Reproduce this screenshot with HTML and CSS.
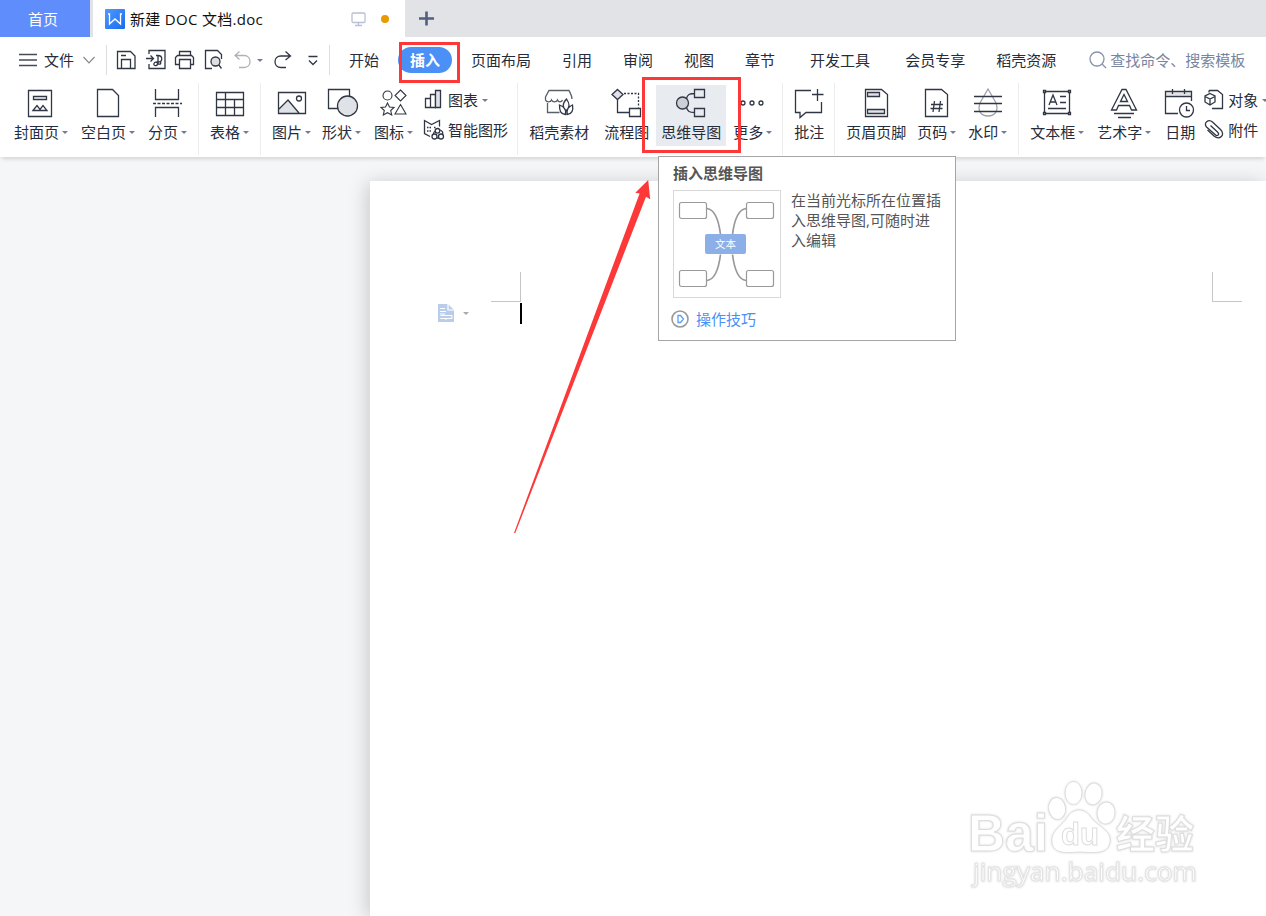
FILE: index.html
```
<!DOCTYPE html>
<html lang="zh-CN">
<head>
    <meta charset="UTF-8">
    <meta name="viewport" content="width=device-width, initial-scale=1.0">
    <title>新建 DOC 文档.doc</title>
    <link rel="stylesheet" href="styles.css">
</head>
<body>
    <header class="titlebar">
        <div class="home-tab">首页</div>
        <div class="doc-tab">
            <svg class="logo" width="20" height="20" viewBox="0 0 20 20">
                <defs><linearGradient id="blue" x1="0" y1="0" x2="1" y2="1"><stop offset="0" stop-color="#5199ff"/><stop offset="1" stop-color="#1a6cf0"/></linearGradient></defs>
                <rect width="20" height="20" rx="1" fill="url(#blue)"/>
                <path d="M3 5h1.500v10l5.500-5 5.500 5V5H17" fill="none" stroke="#fff" stroke-width="1.300"/>
            </svg>
            <span class="doc-name">新建 DOC 文档.doc</span>
            <svg class="monitor" width="16" height="16" viewBox="0 0 16 16" fill="none" stroke="#b9c0d3" stroke-width="1.300"><rect x="2" y="2" width="13" height="9.500" rx="1"/><path d="M8.500 11.500v3M5 14.500h7"/></svg>
            <span class="dot"></span>
        </div>
        <svg class="plus" width="16" height="16" viewBox="0 0 16 16" stroke="#525f7e" stroke-width="2.600"><path d="M8.500 .500v14M1 7.500h15"/></svg>
    </header>

    <nav class="menubar">
        <div class="file-menu">
            <svg width="18" height="14" viewBox="0 0 18 14" stroke="#454b58" stroke-width="1.300"><path d="M0 1.500h18M0 7h18M0 12.500h18"/></svg>
            <span>文件</span>
            <svg class="chevron" width="12" height="8" viewBox="0 0 12 8" fill="none" stroke="#888" stroke-width="1.200"><path d="M.500 1L6 6.800 11.500 1"/></svg>
        </div>
        <div class="quick">
            <svg width="20" height="20" viewBox="0 0 20 20"><path d="M.500 1.500h13l4.500 4.500v12.500H.500zM4.500 18V9.500h9V18M4 5.500h5"/></svg>
            <svg width="20" height="20" viewBox="0 0 20 20"><path d="M3 4V.500h16v18H3V14M0 8.500h7M4.500 5.500l3 3-3 3"/><path d="M10 5.500h2c5 0 5 6.500 0 6.500h-1.500M12 5.500v7c0 4-5 4-4 1 1-2.500 3-1 4 0s3.500 1 2.500-1.500"/></svg>
            <svg width="20" height="20" viewBox="0 0 20 20"><path d="M4.500 5V1.500h11V5M4 14.500H.500v-7l2-2h14l2 2v7H16M4.500 9.500h11v9h-11z"/></svg>
            <svg width="20" height="20" viewBox="0 0 20 20"><path d="M8 18.500H1.500V.500h12l4 4V9M14.500 14.500l3 4"/><circle cx="11.500" cy="11.500" r="4.500" fill="#dcdfe4"/></svg>
            <svg class="undo" width="17" height="20" viewBox="0 0 17 20"><path d="M5.500 1.500L1 5.500l4.500 4M1 5.500h9c8 0 8 12 0 12H5"/></svg>
            <i class="caret"></i>
            <svg class="redo" width="17" height="20" viewBox="0 0 17 20"><path d="M11.500 1.500l5 4.500-5 4M16 6H7c-8 0-8 11.500 0 11.500h5"/></svg>
            <svg class="more-tools" width="10" height="20" viewBox="0 0 10 20"><path d="M.500 6.500h9M1 10.500l4 4 4-4"/></svg>
        </div>
        <div class="tabs">
            <span class="tab">开始</span>
            <span class="tab active">插入</span>
            <span class="tab">页面布局</span>
            <span class="tab">引用</span>
            <span class="tab">审阅</span>
            <span class="tab">视图</span>
            <span class="tab">章节</span>
            <span class="tab loose">开发工具</span>
            <span class="tab loose">会员专享</span>
            <span class="tab">稻壳资源</span>
        </div>
        <div class="search">
            <svg width="18" height="20" viewBox="0 0 18 20" fill="none" stroke="#8792ab" stroke-width="1.300"><circle cx="8" cy="9" r="7"/><path d="M13 14l4 4"/></svg>
            <span>查找命令、搜索模板</span>
        </div>
    </nav>

    <section class="ribbon">
        <div class="btn">
            <svg width="32" height="30" viewBox="0 0 32 30"><path d="M3.500 2.500h23v26h-23zM8.500 8.500h13v3h-13zM8 22.500l4-5 3 4 3-4 4 5z"/></svg>
            <span class="label">封面页<i class="caret"></i></span>
        </div>
        <div class="btn far">
            <svg width="32" height="30" viewBox="0 0 32 30"><path d="M5.500 1.500h15l6 6v21h-21z"/></svg>
            <span class="label">空白页<i class="caret"></i></span>
        </div>
        <div class="btn far">
            <svg width="31" height="30" viewBox="0 0 31 30"><path d="M3.500 1v10.500h23V1M3.500 29v-9.500h23V29"/><path d="M1 15.500h29" stroke-dasharray="3 1.500"/></svg>
            <span class="label">分页<i class="caret"></i></span>
        </div>
        <i class="sep"></i>
        <div class="btn">
            <svg width="31" height="30" viewBox="0 0 31 30"><path d="M2.500 4.500h27v23h-27zM2.500 11.500h27M2.500 19.500h27M11.500 4.500v23M20.500 11.500v16"/></svg>
            <span class="label">表格<i class="caret"></i></span>
        </div>
        <i class="sep"></i>
        <div class="btn">
            <svg width="31" height="30" viewBox="0 0 31 30"><path d="M3 21l9-9 11 13v.500H3z" fill="#dfe2e6" stroke="none"/><path d="M2.500 4.500h27v21h-27zM3 21l9-9 11 13"/><circle cx="23" cy="10.500" r="2.500"/></svg>
            <span class="label">图片<i class="caret"></i></span>
        </div>
        <div class="btn">
            <svg width="31" height="30" viewBox="0 0 31 30"><path d="M2.500 1.500h21v19h-21z"/><circle cx="21.500" cy="18" r="10" fill="#dfe2e6"/></svg>
            <span class="label">形状<i class="caret"></i></span>
        </div>
        <div class="btn far">
            <svg width="31" height="30" viewBox="0 0 31 30" class="thin"><circle cx="9.500" cy="7.500" r="4.500"/><path d="M22.500 2l5.500 5.500-5.500 5.500L17 7.500zM9.500 15l2 4 4.500.500-3.300 3 1 4.500-4.200-2.300L5.300 27l1-4.500-3.300-3 4.500-.500zM22.500 16.500l5.500 9.500H17z"/></svg>
            <span class="label">图标<i class="caret"></i></span>
        </div>
        <div class="stack charts">
            <div class="row">
                <svg width="20" height="20" viewBox="0 0 20 20"><path d="M1.500 8.500h5v9h-5zM6.500 4.500h5v13h-5z"/><path d="M11.500.500h5v17h-5z" fill="#dfe2e6"/></svg>
                <span>图表</span><i class="caret"></i>
            </div>
            <div class="row">
                <svg width="20" height="20" viewBox="0 0 20 20"><path d="M6 16.500l-5.500-3V.500l7 4 8-4v6"/><path d="M3 7.500h4M3 11h4M10 7.500h2" stroke-dasharray="1.500 1"/><circle cx="13.500" cy="10.800" r="2.300"/><circle cx="10.500" cy="16.500" r="2.500"/><circle cx="17" cy="16.500" r="2.500"/><path d="M11.500 11c-2 1-2 2-2 3M16 10c3 1 3 3 2.500 4M13 18h2"/></svg>
                <span>智能图形</span>
            </div>
        </div>
        <i class="sep tight"></i>
        <div class="btn">
            <svg width="32" height="30" viewBox="0 0 32 30"><path d="M29 11c0-4-2-6-3-8.500H6L2.500 9v3c1 2.500 5 2.500 6 0 1 2.500 5 2.500 6 0 1 2.500 4 2.500 5 0M4.500 15v9.500h12" stroke="#59606c"/><path d="M23.500 11c-4.500 5-4 8-.500 12 4-4 4-7 .500-12zM16.500 17c0 6 1 9 6 9.500 1-4-1-7.500-6-9.500zM29.500 17c-5 2-6 5-5.500 9.500 5-.500 6.500-4 5.500-9.500z" fill="#fff"/></svg>
            <span class="label">稻壳素材</span>
        </div>
        <div class="btn flow">
            <svg width="31" height="30" viewBox="0 0 31 30"><path d="M6.500 1.500l5.500 5-5.500 5-5.500-5z" fill="#dfe2e6"/><path d="M6.500 12v12.500h12M18.500 20.500h11v8h-11z"/><path d="M13 5.500h14.500v14" stroke-dasharray="2 1.500"/></svg>
            <span class="label">流程图</span>
        </div>
        <div class="btn selected">
            <svg width="32" height="30" viewBox="0 0 32 30"><path d="M19.500 1.500h10v8h-10zM19.500 20.500h10v8h-10zM19.500 5.500c-5 0-7 1-8 5M19.500 24.500c-5 0-7-1-8-5"/><circle cx="7.500" cy="15" r="6" fill="#ccd0d6"/></svg>
            <span class="label">思维导图</span>
        </div>
        <div class="btn">
            <svg width="31" height="30" viewBox="0 0 31 30"><circle cx="6" cy="15" r="2"/><circle cx="15" cy="15" r="2"/><circle cx="24" cy="15" r="2"/></svg>
            <span class="label">更多<i class="caret"></i></span>
        </div>
        <i class="sep less"></i>
        <div class="btn">
            <svg width="30" height="30" viewBox="0 0 30 30"><path d="M17 2.500H1.500v22h4.500v5l6-5h15.500V14M23.500 1v12M18 6.500h11.500"/></svg>
            <span class="label">批注</span>
        </div>
        <i class="sep less"></i>
        <div class="btn">
            <svg width="32" height="30" viewBox="0 0 32 30"><path d="M5.500 1.500h16l6 5v22h-22z"/><path d="M7.500 4.500h12v4h-12zM7.500 21.500h17v4h-17z" fill="#dfe2e6"/></svg>
            <span class="label">页眉页脚</span>
        </div>
        <div class="btn">
            <svg width="31" height="30" viewBox="0 0 31 30"><path d="M4.500 1.500h16l6 5v22h-22zM13.500 13l-1.500 11M19.500 13L18 24M10 16.500h12M9.500 20.500h12"/></svg>
            <span class="label">页码<i class="caret"></i></span>
        </div>
        <div class="btn near">
            <svg width="31" height="30" viewBox="0 0 31 30"><path d="M16 1L8.500 14c-4 9 1 14 7.500 14s11.500-5 7.500-14z" stroke="#9ca1ab"/><path d="M2 8.500h28M2 15.500h28M2 23.500h28"/></svg>
            <span class="label">水印<i class="caret"></i></span>
        </div>
        <i class="sep"></i>
        <div class="btn">
            <svg width="32" height="30" viewBox="0 0 32 30"><path d="M3.500 3.500h25v22h-25zM8 17l4-10 4 10M9.500 14h5M19 8.500h6M19 14.500h6M7 20.500h18"/><path d="M2.500 2.500h2v2h-2zM27.500 2.500h2v2h-2zM2.500 24.500h2v2h-2zM27.500 24.500h2v2h-2z" fill="#fff"/></svg>
            <span class="label">文本框<i class="caret"></i></span>
        </div>
        <div class="btn far">
            <svg width="32" height="30" viewBox="0 0 32 30"><path d="M14 1.500h4l10.500 20.500h-5l-2-4.500h-11l-2 4.500h-5zM12.500 13.500l3.500-7 3.500 7zM6 25.500h20M10 29.500h13"/></svg>
            <span class="label">艺术字<i class="caret"></i></span>
        </div>
        <div class="btn date">
            <svg width="30" height="30" viewBox="0 0 30 30"><path d="M1 4.500h25v3H1z" fill="#dfe2e6" stroke="none"/><path d="M13 25.500H.500v-22h26V13M.500 8.500h26M7.500 1v5M19.500 1v5"/><circle cx="21.500" cy="22" r="7" fill="#fff"/><path d="M21.500 18v4.500H25"/></svg>
            <span class="label">日期</span>
        </div>
        <div class="stack objects">
            <div class="row">
                <svg width="20" height="20" viewBox="0 0 20 20"><path d="M5 .500h8.500l5 4v14H13M5 .500v2M8 18.500h5"/><path d="M6 3.500l5 2.500v6l-5 3-5-3V6zM1 6.500l5 2.500 5-2.500M6 9v6" fill="#fff"/></svg>
                <span>对象</span><i class="caret"></i>
            </div>
            <div class="row">
                <svg width="20" height="20" viewBox="0 0 20 20"><path d="M6.500 5.500l7 6.500c2.500 2.500 0 5-2.500 2.500L2.500 7C-1 3 4.500-1.500 8.500 2l8 7.500c5.500 5.500-1 11-6.500 6.500L3.500 10"/></svg>
                <span>附件</span>
            </div>
        </div>
    </section>

    <main class="workspace">
        <div class="page">
            <div class="page-top">
                <i class="corner left"></i>
                <i class="corner right"></i>
            </div>
            <div class="line">
                <svg class="paste" width="16" height="18" viewBox="0 0 16 18"><path d="M0 0h10l6 6v12H0z" fill="#b9cdeb"/><path d="M10 0v6h6M2 4.500h5M2 7.500h6M2 10h5" fill="none" stroke="#fff" stroke-width="1.200"/><path d="M2.500 11.500h11.500v3H8v1.500M8 14.500H2.500z" fill="none" stroke="#fff"/></svg>
                <i class="caret gray"></i>
                <i class="cursor"></i>
            </div>
        </div>
    </main>

    <aside class="tooltip">
        <h3>插入思维导图</h3>
        <div class="tip-body">
            <svg width="108" height="108" viewBox="0 0 108 108" fill="none" stroke="#999" stroke-width="1.200">
                <rect x=".500" y=".500" width="107" height="107" stroke="#d9d9d9" stroke-width="1"/>
                <rect x="6.500" y="12.500" width="27" height="16" rx="2"/>
                <rect x="73.500" y="12.500" width="27" height="16" rx="2"/>
                <rect x="6.500" y="80.500" width="27" height="16" rx="2"/>
                <rect x="73.500" y="80.500" width="27" height="16" rx="2"/>
                <path d="M34 18.500c8 1 12 14 13.500 26M73 18.500c-8 1-12 14-13.500 26M34 90.500c8-1 12-14 13.500-26M73 90.500c-8-1-12-14-13.500-26" stroke-width="1.700"/>
                <rect x="32" y="44" width="41" height="20" rx="2" fill="#8dafe8" stroke="none"/>
                <text x="52.500" y="58" text-anchor="middle" font-size="10.500" fill="#fff" stroke="none">文本</text>
            </svg>
            <p>在当前光标所在位置插入思维导图,可随时进入编辑</p>
        </div>
        <div class="tip-link">
            <svg width="18" height="18" viewBox="0 0 18 18" fill="none"><circle cx="9" cy="9" r="8" stroke="#999" stroke-width="1.600"/><path d="M7 5.500v7h2.500l3-3.500-3-3.500z" stroke="#5c9df5" stroke-width="1.300"/></svg>
            <span>操作技巧</span>
        </div>
    </aside>

    <svg class="watermark" width="240" height="120" viewBox="0 0 240 120">
        <g class="paw">
            <ellipse cx="97" cy="28.500" rx="8.500" ry="11" transform="rotate(-8 97 28)"/>
            <ellipse cx="113.500" cy="13" rx="8.500" ry="11.500"/>
            <ellipse cx="133.500" cy="14" rx="8.500" ry="11" transform="rotate(10 133.500 14)"/>
            <ellipse cx="146" cy="33" rx="9" ry="11" transform="rotate(5 146 33)"/>
            <path d="M108 36c6-8 16-8 22 0 6 10 22 14 20 26-2 12-14 11-30 10-14 1-26 2-28-9-2-13 11-17 16-27z"/>
        </g>
        <text x="8" y="71" font-size="51" textLength="80" lengthAdjust="spacingAndGlyphs" class="bold">Bai</text>
        <text x="101" y="65" font-size="32" textLength="38" lengthAdjust="spacingAndGlyphs" class="bold">du</text>
        <text x="156" y="68" font-size="39" textLength="78" lengthAdjust="spacingAndGlyphs" class="bold">经验</text>
        <text x="13" y="101" font-size="25" textLength="224" lengthAdjust="spacingAndGlyphs" class="site">jingyan.baidu.com</text>
    </svg>

    <!-- red boxes and arrow -->
    <svg class="marks" width="1266" height="916" viewBox="0 0 1266 916">
        <rect x="400.500" y="43.500" width="58" height="38"/>
        <rect x="643.500" y="78.500" width="96" height="73"/>
        <path d="M648.200 180L635.300 192.700l4.300.800L514 533h1.300L646 196.800l4.200 2.400z"/>
    </svg>
</body>
</html>
```
FILE: styles.css
```
* {
    box-sizing: border-box;
}

body {
    margin: 0;
    height: 916px;
    position: relative;
    display: flex;
    flex-direction: column;
    overflow: hidden;
    font-family: "Open Sans", "Noto Sans CJK SC", sans-serif;
    font-size: 15px;
    line-height: 20px;
    color: #262c39;
    background: #f5f6f8;
    white-space: nowrap;
}

svg {
    flex: none;
    overflow: visible;
}

.titlebar {
    height: 37px;
    flex: none;
    display: flex;
    align-items: center;
    background: #e1e3e7;
}

.home-tab {
    width: 90px;
    height: 37px;
    line-height: 38px;
    padding-right: 4px;
    text-align: center;
    color: #fff;
    background: #608dfc;
}

.doc-tab {
    width: 312px;
    height: 37px;
    margin-left: 3px;
    padding: 0 16px 0 12px;
    display: flex;
    align-items: center;
    background: #fff;
    color: #111;
}

.doc-name {
    margin-left: 5px;
    letter-spacing: 0.3px;
}

.monitor {
    margin-left: auto;
}

.dot {
    width: 8px;
    height: 8px;
    margin-left: 15px;
    border-radius: 50%;
    background: #e89a00;
}

.plus {
    margin-left: 13px;
}

.menubar {
    height: 46px;
    flex: none;
    display: flex;
    align-items: center;
    background: #fff;
}

.file-menu {
    width: 107px;
    height: 30px;
    padding-left: 19px;
    display: flex;
    align-items: center;
    gap: 7px;
    border-right: 1px solid #ddd;
}

.chevron {
    margin-left: 2px;
}

.quick {
    width: 223px;
    height: 30px;
    padding-left: 10px;
    display: flex;
    align-items: center;
    gap: 9px;
    border-right: 1px solid #ddd;
    fill: none;
    stroke: #303644;
    stroke-width: 1.3;
}

.undo {
    stroke: #aeb1b7;
    margin-left: 1px;
}

.quick .caret {
    margin-left: -3px;
}

.redo {
    margin-left: 2px;
}

.more-tools {
    margin-left: 8px;
}

.tabs {
    display: flex;
    gap: 31px;
    margin-left: 19px;
}

.loose {
    margin-left: 4px;
}

.active {
    height: 26px;
    margin: -3px -12px;
    padding: 0 12px;
    line-height: 26px;
    border-radius: 13px;
    background: #4a90f6;
    color: #fff;
    font-weight: bold;
}

.search {
    display: flex;
    align-items: center;
    gap: 3px;
    margin-left: 33px;
    color: #7885a0;
}

.caret {
    flex: none;
    display: inline-block;
    border: 3px solid transparent;
    border-top-color: #6f7d99;
    border-bottom: 0;
}

.ribbon {
    height: 74px;
    flex: none;
    display: flex;
    gap: 11px;
    padding-left: 14px;
    background: #fff;
    box-shadow: 0 4px 4px -2px rgba(0, 0, 0, 0.14);
    overflow: hidden;
    position: relative;
}

.ribbon svg {
    fill: none;
    stroke: #303644;
    stroke-width: 1.3;
}

.ribbon .thin {
    stroke-width: 1.1;
}

.btn {
    flex: none;
    display: flex;
    flex-direction: column;
    align-items: center;
    gap: 4px;
    padding-top: 5px;
}

.label {
    display: flex;
    align-items: center;
    gap: 3px;
}

.far {
    margin-left: 2px;
}

.near {
    margin-left: 1px;
}

.flow {
    margin-left: 4px;
}

.date {
    margin-left: 3px;
}

.selected {
    width: 70px;
    height: 61px;
    margin: 2px -4px 0;
    padding-top: 3px;
    background: #e8ebf0;
}

.sep {
    width: 1px;
    height: 72px;
    flex: none;
    background: #ededee;
}

.tight {
    margin-left: -2px;
}

.less {
    margin-left: -1px;
}

.stack {
    flex: none;
    display: flex;
    flex-direction: column;
    gap: 10px;
    padding-top: 7px;
}

.row {
    height: 20px;
    display: flex;
    align-items: center;
    gap: 4px;
}

.objects {
    margin-left: -2px;
}

.workspace {
    flex: 1;
    padding: 24px 0 0 370px;
}

.page {
    height: 100%;
    background: #fff;
    box-shadow: -3px 2px 18px rgba(0, 0, 0, 0.18);
}

.page-top {
    height: 121px;
    display: flex;
    justify-content: space-between;
    align-items: flex-end;
    padding: 0 24px 0 121px;
}

.corner {
    width: 30px;
    height: 30px;
    border-bottom: 1px solid #c5c5c5;
}

.left {
    border-right: 1px solid #c5c5c5;
}

.right {
    border-left: 1px solid #c5c5c5;
}

.line {
    display: flex;
    align-items: center;
    padding: 1px 0 0 68px;
}

.paste {
    margin-bottom: 1px;
}

.gray {
    margin-left: 9px;
    border-top-color: #aaa;
}

.cursor {
    width: 2px;
    height: 21px;
    margin-left: 51px;
    background: #000;
}

.tooltip {
    position: absolute;
    left: 658px;
    top: 156px;
    width: 298px;
    height: 185px;
    padding: 6px 12px 0 14px;
    border: 1px solid #a5a5a5;
    background: #fff;
    color: #555;
}

.tooltip h3 {
    margin: 0 0 7px;
    font-size: 15px;
    line-height: 20px;
}

.tip-body {
    display: flex;
    gap: 10px;
}

.tip-body p {
    width: 152px;
    margin: 0;
    white-space: normal;
}

.tip-link {
    display: flex;
    align-items: center;
    gap: 7px;
    margin: 11px 0 0 -2px;
    color: #4a90f6;
}

.watermark {
    position: absolute;
    left: 960px;
    top: 780px;
    font-family: "Liberation Sans", "Noto Sans CJK SC", sans-serif;
    fill: #fff;
    stroke: #ddd;
    stroke-width: 1;
    filter: drop-shadow(0 0 1px rgba(0, 0, 0, 0.15));
}

.bold {
    font-weight: bold;
}

.site {
    font-family: "Open Sans", sans-serif;
    stroke: #e3e3e3;
    font-weight: 500;
}

.marks {
    position: absolute;
    left: 0;
    top: 0;
    pointer-events: none;
}

.marks rect {
    fill: none;
    stroke: #fd3838;
    stroke-width: 3;
}

.marks path {
    fill: #fd3838;
}
```
